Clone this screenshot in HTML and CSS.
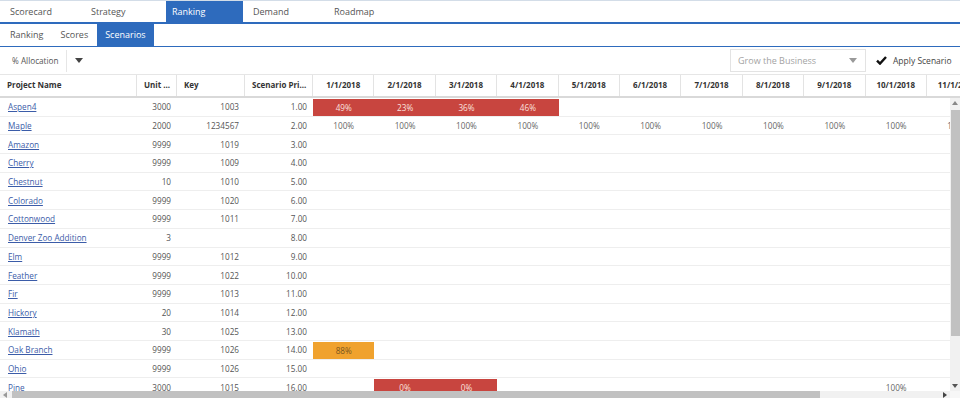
FILE: index.html
```html
<!DOCTYPE html>
<html lang="en">
  <head>
    <meta charset="UTF-8">
    <title>Scenarios</title>
    <link rel="stylesheet" href="styles.css">
  </head>
  <body>
    <div class="app">
      <nav class="tabs main-tabs">
        <a class="tab">Scorecard</a>
        <a class="tab">Strategy</a>
        <a class="tab active">Ranking</a>
        <a class="tab">Demand</a>
        <a class="tab">Roadmap</a>
      </nav>
      <nav class="tabs sub-tabs">
        <a class="tab">Ranking</a>
        <a class="tab">Scores</a>
        <a class="tab active">Scenarios</a>
      </nav>

      <div class="toolbar">
        <div class="alloc">% Allocation</div>
        <div class="alloc-caret">
          <svg width="8" height="5" viewBox="0 0 8 5"><path d="M0 0h8L4 5z" fill="#444"/></svg>
        </div>
        <div class="select">
          <span>Grow the Business</span>
          <svg width="8" height="5" viewBox="0 0 8 5"><path d="M0 0h8L4 5z" fill="#999"/></svg>
        </div>
        <button class="apply">
          <svg width="11" height="9" viewBox="0 0 11 9"><path d="M1 4.6l3 3L10 1" fill="none" stroke="#111" stroke-width="2.4"/></svg>
          Apply Scenario
        </button>
      </div>

      <div class="grid-head">
        <div class="hc">Project Name</div>
        <div class="hc">Unit ...</div>
        <div class="hc">Key</div>
        <div class="hc">Scenario Pri...</div>
        <div class="hc date">1/1/2018</div>
        <div class="hc date">2/1/2018</div>
        <div class="hc date">3/1/2018</div>
        <div class="hc date">4/1/2018</div>
        <div class="hc date">5/1/2018</div>
        <div class="hc date">6/1/2018</div>
        <div class="hc date">7/1/2018</div>
        <div class="hc date">8/1/2018</div>
        <div class="hc date">9/1/2018</div>
        <div class="hc date">10/1/2018</div>
        <div class="hc date">11/1/2018</div>
        <div class="hc date">12/1/2018</div>
      </div>

      <div class="grid-body">
        <div class="rows">
          <div class="row">
            <a class="name">Aspen4</a><span class="num">3000</span><span class="num">1003</span><span class="num">1.00</span>
            <span class="pct red">49%</span><span class="pct red">23%</span><span class="pct red">36%</span><span class="pct red">46%</span>
          </div>
          <div class="row">
            <a class="name">Maple</a><span class="num">2000</span><span class="num">1234567</span><span class="num">2.00</span>
            <span class="pct">100%</span><span class="pct">100%</span><span class="pct">100%</span><span class="pct">100%</span>
            <span class="pct">100%</span><span class="pct">100%</span><span class="pct">100%</span><span class="pct">100%</span>
            <span class="pct">100%</span><span class="pct">100%</span><span class="pct">100%</span><span class="pct">100%</span>
          </div>
          <div class="row"><a class="name">Amazon</a><span class="num">9999</span><span class="num">1019</span><span class="num">3.00</span></div>
          <div class="row"><a class="name">Cherry</a><span class="num">9999</span><span class="num">1009</span><span class="num">4.00</span></div>
          <div class="row"><a class="name">Chestnut</a><span class="num">10</span><span class="num">1010</span><span class="num">5.00</span></div>
          <div class="row"><a class="name">Colorado</a><span class="num">9999</span><span class="num">1020</span><span class="num">6.00</span></div>
          <div class="row"><a class="name">Cottonwood</a><span class="num">9999</span><span class="num">1011</span><span class="num">7.00</span></div>
          <div class="row"><a class="name">Denver Zoo Addition</a><span class="num">3</span><span class="num"></span><span class="num">8.00</span></div>
          <div class="row"><a class="name">Elm</a><span class="num">9999</span><span class="num">1012</span><span class="num">9.00</span></div>
          <div class="row"><a class="name">Feather</a><span class="num">9999</span><span class="num">1022</span><span class="num">10.00</span></div>
          <div class="row"><a class="name">Fir</a><span class="num">9999</span><span class="num">1013</span><span class="num">11.00</span></div>
          <div class="row"><a class="name">Hickory</a><span class="num">20</span><span class="num">1014</span><span class="num">12.00</span></div>
          <div class="row"><a class="name">Klamath</a><span class="num">30</span><span class="num">1025</span><span class="num">13.00</span></div>
          <div class="row">
            <a class="name">Oak Branch</a><span class="num">9999</span><span class="num">1026</span><span class="num">14.00</span>
            <span class="pct orange">88%</span>
          </div>
          <div class="row"><a class="name">Ohio</a><span class="num">9999</span><span class="num">1026</span><span class="num">15.00</span></div>
          <div class="row">
            <a class="name">Pine</a><span class="num">3000</span><span class="num">1015</span><span class="num">16.00</span>
            <span class="pct red d2">0%</span><span class="pct red">0%</span><span class="pct d10">100%</span>
          </div>
        </div>
        <div class="vscroll">
          <div class="arrow"><svg width="6" height="4" viewBox="0 0 6 4"><path d="M0 4h6L3 0z" fill="#888"/></svg></div>
          <div class="vthumb"></div>
          <div class="vtrack"></div>
          <div class="arrow"><svg width="6" height="4" viewBox="0 0 6 4"><path d="M0 0h6L3 4z" fill="#555"/></svg></div>
        </div>
      </div>

      <div class="hscroll">
        <div class="harrow"><svg width="4" height="6" viewBox="0 0 4 6"><path d="M4 0v6L0 3z" fill="#999"/></svg></div>
        <div class="hthumb"></div>
        <div class="htrack"></div>
        <div class="harrow"><svg width="4" height="6" viewBox="0 0 4 6"><path d="M0 0v6l4-3z" fill="#444"/></svg></div>
        <div class="corner"></div>
      </div>
    </div>
  </body>
</html>
```

FILE: styles.css
```css
* {
  box-sizing: border-box;
}

body {
  margin: 0;
  background: #fff;
  color: #555;
  font-family: "Open Sans", "Liberation Sans", sans-serif;
}

.app {
  --cols: 137px 40px 68px 68px repeat(12, 61.4px);
  height: 100vh;
  display: flex;
  flex-direction: column;
  overflow: hidden;
}

/* --------------- Tabs ----------------- */

.tabs {
  display: flex;
  flex-shrink: 0;
}

.tab {
  font-size: 9px;
  color: #555;
  cursor: pointer;
}

.tab.active {
  background: #2e6bbd;
  color: #fff;
}

.main-tabs {
  height: 24px;
  padding-left: 4px;
  border-top: 1px solid #d3dde8;
  border-bottom: 2px solid #2e6bbd;
}

.main-tabs .tab {
  width: 77px;
  margin-right: 4px;
  padding-left: 6px;
  line-height: 21px;
}

.sub-tabs {
  height: 23px;
  padding-left: 2px;
  border-bottom: 1px solid #2e6bbd;
}

.sub-tabs .tab {
  padding: 0 8px;
  margin-right: 1px;
  line-height: 22px;
}

/* --------------- Toolbar ----------------- */

.toolbar {
  height: 27px;
  flex-shrink: 0;
  display: flex;
  align-items: center;
  font-size: 8.2px;
}

.alloc {
  width: 67px;
  height: 22px;
  line-height: 22px;
  padding-left: 12px;
  border-right: 1px solid #e6e6e6;
  color: #555;
}

.alloc-caret {
  padding-left: 8px;
  display: flex;
}

.select {
  margin-left: auto;
  width: 136px;
  height: 23px;
  padding: 0 8px 0 7px;
  border: 1px solid #e3e3e3;
  display: flex;
  align-items: center;
  justify-content: space-between;
  color: #a3a3a3;
  font-size: 9px;
}

.apply {
  width: 94px;
  height: 23px;
  padding: 0 0 0 10px;
  border: none;
  background: #fff;
  display: flex;
  align-items: center;
  gap: 6px;
  color: #444;
  font-family: inherit;
  font-size: 8.5px;
  white-space: nowrap;
}

/* --------------- Grid ----------------- */

.grid-head {
  display: grid;
  grid-template-columns: var(--cols);
  height: 24px;
  flex-shrink: 0;
  border-top: 1px solid #e6e6e6;
  border-bottom: 2px solid #d9d9d9;
}

.hc {
  padding-left: 7px;
  border-right: 1px solid #e3e3e3;
  font-size: 8px;
  font-weight: 700;
  color: #333;
  line-height: 20px;
  white-space: nowrap;
  overflow: hidden;
}

.hc.date {
  padding-left: 0;
  text-align: center;
}

.grid-body {
  flex: 1;
  min-height: 0;
  display: flex;
}

.rows {
  flex: 1;
  overflow: hidden;
}

.row {
  display: grid;
  grid-template-columns: var(--cols);
  height: 18.7px;
  border-bottom: 1px solid #eeeeee;
  font-size: 8.2px;
}

.row > * {
  display: flex;
  align-items: center;
  white-space: nowrap;
  overflow: hidden;
}

.name {
  padding-left: 8px;
  color: #3b5ca8;
  text-decoration: underline;
  cursor: pointer;
}

.num {
  justify-content: flex-end;
  padding-right: 6px;
  color: #555;
}

.pct {
  justify-content: center;
  color: #666;
}

.red {
  margin-top: 1px;
  background: #c8453f;
  color: #fbe2df;
}

.orange {
  margin-top: 1px;
  background: #f0a22e;
  color: #7a5620;
}

.d2 {
  grid-column: 6;
}

.d10 {
  grid-column: 14;
}

/* --------------- Scrollbars ----------------- */

.vscroll {
  width: 10px;
  flex-shrink: 0;
  display: flex;
  flex-direction: column;
  background: #f1f1f1;
}

.arrow {
  height: 10px;
  display: flex;
  align-items: center;
  justify-content: center;
}

.vthumb {
  height: 226px;
  margin: 2px 0 0 1px;
  background: #c1c1c1;
}

.vtrack {
  flex: 1;
}

.hscroll {
  height: 7px;
  flex-shrink: 0;
  display: flex;
  background: #f1f1f1;
}

.harrow {
  width: 10px;
  display: flex;
  align-items: center;
  justify-content: center;
}

.hthumb {
  width: 808px;
  margin-left: 2px;
  background: #c1c1c1;
}

.htrack {
  flex: 1;
}

.corner {
  width: 10px;
  background: #f7f7f7;
}
```
